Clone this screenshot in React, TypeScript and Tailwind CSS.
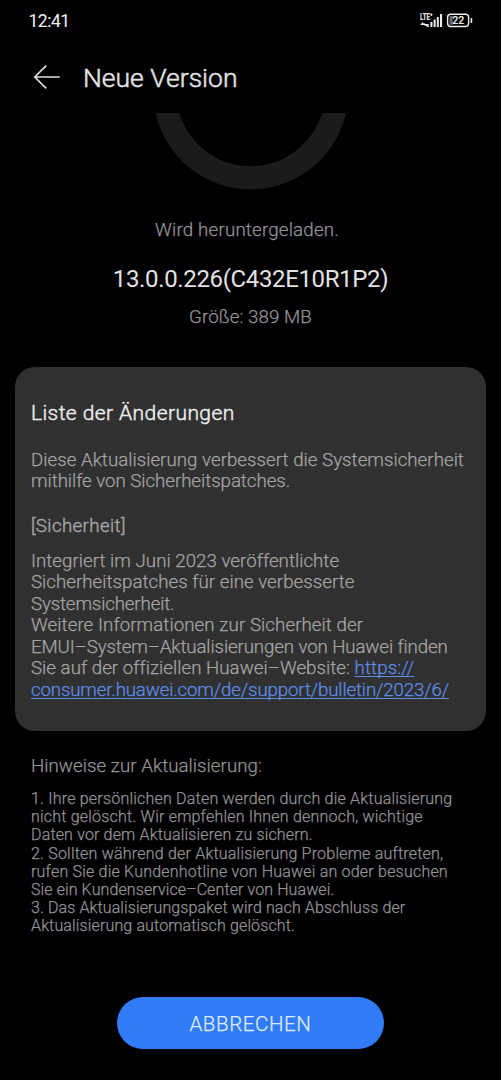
import clsx from "clsx";

type Line = { text: string; className?: string };

const intro: Line[] = [
  { text: "Diese Aktualisierung verbessert die Systemsicherheit", className: "tracking-[0.03px]" },
  { text: "mithilfe von Sicherheitspatches.", className: "tracking-[-0.04px]" },
];

const security: Line[] = [
  { text: "Integriert im Juni 2023 veröffentlichte", className: "tracking-[0.03px]" },
  { text: "Sicherheitspatches für eine verbesserte", className: "tracking-[0.03px]" },
  { text: "Systemsicherheit.", className: "tracking-[-0.14px]" },
  { text: "Weitere Informationen zur Sicherheit der", className: "tracking-[0.08px]" },
  { text: "EMUI–System–Aktualisierungen von Huawei finden", className: "tracking-[-0.11px]" },
];

const notes: Line[] = [
  { text: "1. Ihre persönlichen Daten werden durch die Aktualisierung", className: "tracking-[0.21px]" },
  { text: "nicht gelöscht. Wir empfehlen Ihnen dennoch, wichtige", className: "tracking-[0.21px]" },
  { text: "Daten vor dem Aktualisieren zu sichern.", className: "tracking-[0.16px]" },
  { text: "2. Sollten während der Aktualisierung Probleme auftreten,", className: "tracking-[0.21px]" },
  { text: "rufen Sie die Kundenhotline von Huawei an oder besuchen", className: "tracking-[0.21px]" },
  { text: "Sie ein Kundenservice–Center von Huawei.", className: "tracking-[0.1px]" },
  { text: "3. Das Aktualisierungspaket wird nach Abschluss der", className: "tracking-[0.11px]" },
  { text: "Aktualisierung automatisch gelöscht.", className: "tracking-[0.14px]" },
];

function Lines({ lines }: { lines: Line[] }) {
  return (
    <>
      {lines.map((line) => (
        <span key={line.text} className={clsx("block whitespace-nowrap", line.className)}>
          {line.text}
        </span>
      ))}
    </>
  );
}

function StatusBar() {
  return (
    <div className="flex h-[40px] items-start justify-between pl-[28.5px] pr-[28px] pt-[9px] [-webkit-text-stroke:0]">
      <span className="text-[17.5px] leading-6 font-normal tracking-[-0.5px] text-[#f2f2f2]">
        12:41
      </span>
      <svg width="54" height="18" viewBox="419 12 54 18" className="mt-[3px]" fill="#ececec">
        <text
          x="420"
          y="19.8"
          fontSize="9"
          fontWeight="800"
          textLength="9.8"
          lengthAdjust="spacingAndGlyphs"
        >
          LTE
        </text>
        <path d="M430 14.7h2.6M431.3 13.4v2.6" stroke="#ececec" strokeWidth="1" />
        <path d="M420.6 24.2l2.4-2.2v1.3h1.8v1.6h-4.2zM428.8 24.8l-2.4 2.2v-1.3h-2v-1.6h4.4z" />
        <path d="M427.2 25.4h1.8V27h-1.8zM430.4 22h2v5h-2zM433.6 19.5h2V27h-2zM436.8 17h2v10h-2zM440 14h2.1v13H440z" />
        <rect x="447.6" y="14.2" width="21" height="12.3" rx="3" fill="none" stroke="#ececec" strokeWidth="1.4" />
        <path d="M449.5 16h3.2v8.8h-3.2z" fill="#6a6a6a" />
        <path d="M470.6 18h1.6v5h-1.6z" />
        <text
          x="452.2"
          y="24.3"
          fontSize="11"
          fontWeight="600"
          textLength="12"
          lengthAdjust="spacingAndGlyphs"
        >
          22
        </text>
      </svg>
    </div>
  );
}

function BackArrow() {
  return (
    <svg
      width="28"
      height="26"
      viewBox="33 64 28 26"
      className="mt-[6px]"
      fill="none"
      stroke="#dcdcdc"
      strokeWidth="1.7"
    >
      <path d="M46.2 65.6L34.8 77l11.4 11.4M34.8 77h25" />
    </svg>
  );
}

export default function App() {
  return (
    <div className="flex h-[1080px] w-[501px] flex-col overflow-hidden bg-black font-['Roboto',sans-serif] font-light text-[#949494] [-webkit-text-stroke:0.25px]">
      <StatusBar />
      <header className="flex h-[73px] items-start pl-[33px] pt-[18px]">
        <BackArrow />
        <h1 className="ml-[22px] text-[26.5px] leading-10 text-[#e2e2e2] [-webkit-text-stroke:0.5px]">
          Neue Version
        </h1>
      </header>

      {/* progress ring, scrolled half way under the header */}
      <section className="flex flex-col items-center">
        <svg width="200" height="80" viewBox="150.5 113 200 80">
          <circle cx="250.2" cy="91.6" r="86" fill="none" stroke="#1b1b1b" strokeWidth="23.3" />
        </svg>
        <p className="mt-[25.6px] mr-[7px] text-[18.7px] leading-[22px] tracking-[0.2px]">
          Wird heruntergeladen.
        </p>
        <p className="mt-[22.4px] text-2xl leading-8 font-normal tracking-[-0.36px] text-[#e2e2e2] [-webkit-text-stroke:0]">
          13.0.0.226(C432E10R1P2)
        </p>
        <p className="mt-[11px] text-[18.7px] leading-[22px] tracking-[0.08px]">Größe: 389 MB</p>
      </section>

      <section className="mx-[15.3px] mt-[39px] h-[364.3px] shrink-0 rounded-[20px] bg-[#303030] px-[15.7px] pt-8 text-[18.7px] leading-[21.45px] text-[#a4a4a4]">
        <h2 className="text-[21px] leading-7 tracking-[0.42px] text-[#ececec] [-webkit-text-stroke:0.45px]">
          Liste der Änderungen
        </h2>
        <p className="mt-[23px]">
          <Lines lines={intro} />
        </p>
        <h3 className="mt-[22.7px] tracking-[0.38px] [-webkit-text-stroke:0.45px]">[Sicherheit]</h3>
        <p className="mt-[14px]">
          <Lines lines={security} />
          <span className="block whitespace-nowrap tracking-[0.03px]">
            Sie auf der offiziellen Huawei–Website:{" "}
            <a className="tracking-[0.12px] text-[#5c8de8] underline decoration-1 underline-offset-2 [text-decoration-skip-ink:none]">
              https://
            </a>
          </span>
          <a className="block whitespace-nowrap tracking-[-0.15px] text-[#5c8de8] underline decoration-1 underline-offset-2 [text-decoration-skip-ink:none]">
            consumer.huawei.com/de/support/bulletin/2023/6/
          </a>
        </p>
      </section>

      <section className="px-[31px] pt-[24.3px]">
        <h2 className="text-[18.7px] leading-[21.45px] tracking-[0.05px]">
          Hinweise zur Aktualisierung:
        </h2>
        <p className="mt-[13.2px] text-base leading-[18.1px]">
          <Lines lines={notes} />
        </p>
      </section>

      <button className="mx-auto mt-auto mb-[31px] h-[51.7px] w-[266.4px] shrink-0 rounded-full bg-[#317bf7] pt-0.5 text-[20.5px] tracking-[0.6px] text-[#dfeafe]">
        ABBRECHEN
      </button>
    </div>
  );
}
